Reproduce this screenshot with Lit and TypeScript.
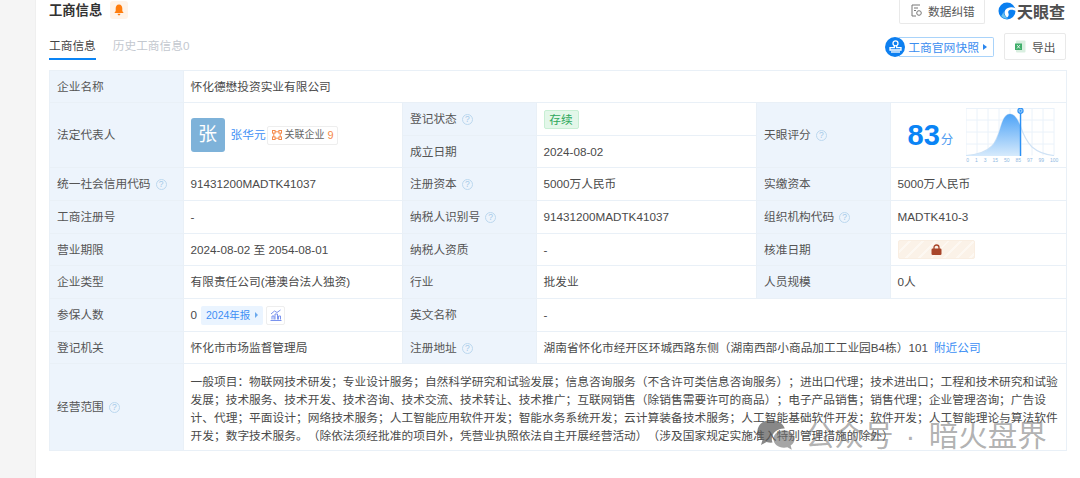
import { LitElement, html, css, svg } from "lit";
import { customElement } from "lit/decorators.js";

const help = html`<span class="help">?</span>`;

const curve = "M0 47.5C12 47 20 44 26 38C31 33 33 24 36 15C38 9 41 6 44 6C48 6 51 10 54 17C57 26 60 33 66 39C72 44 80 47 88 47.5";

const chart = svg`
<defs><linearGradient id="fillg" x1="0" y1="0" x2="0" y2="1"><stop offset="0" stop-color="#4da3f7"/><stop offset="1" stop-color="#d6eafc"/></linearGradient>
<clipPath id="leftc"><rect x="0" y="0" width="54.5" height="48"/></clipPath></defs>
${[0, 11, 22, 33, 44, 55, 66, 77, 88].map((x) => svg`<line x1=${x} y1="0" x2=${x} y2="47.5" stroke="#eaf2fa" stroke-width="1"/>`)}
${[0.5, 12, 24, 36].map((y) => svg`<line x1="0" y1=${y} x2="88" y2=${y} stroke="#eaf2fa" stroke-width="1"/>`)}
<path d=${curve} fill="none" stroke="#cfe2f5" stroke-width="1.2"/>
<path d=${curve + "V48H0Z"} fill="url(#fillg)" clip-path="url(#leftc)"/>
<line x1="54.5" y1="6" x2="54.5" y2="48" stroke="#2b90f5" stroke-width="1.4"/>
<circle cx="54.5" cy="2.8" r="2.6" fill="#9ccdf9" stroke="#2b90f5" stroke-width="1.1"/>
<circle cx="54.5" cy="2.8" r="0.9" fill="#2b90f5"/>
`;

@customElement("app-root")
export class AppRoot extends LitElement {
  static styles = css`
    :host { display: block; position: relative; width: 1080px; height: 478px; overflow: hidden; background: #fff;
      font-family: "Liberation Sans", "Noto Sans CJK SC", sans-serif; font-size: 11.7px; color: #4a4a4a; text-spacing-trim: space-all; }
    .page { display: flex; height: 478px; }
    .rail { width: 36px; flex: none; background: #f5f5f5; border-right: 1px solid #efefef; box-sizing: border-box; }
    .main { flex: 1; padding: 0 14px 0 13px; min-width: 0; }
    .head { display: flex; align-items: center; height: 24px; }
    .title { font-size: 13.3px; font-weight: 700; color: #333; line-height: 20px; margin-top: -3px; }
    .bell { width: 18px; height: 18px; margin: -5px 0 0 7.5px; background: #fff3e8; border-radius: 3px; display: flex; align-items: center; justify-content: center; }
    .spacer { flex: 1; }
    .btn { display: flex; align-items: center; box-sizing: border-box; border: 1px solid #e9e9e9; border-radius: 2px; background: #fff; color: #555; }
    .fix { width: 86px; height: 25px; margin-top: -2px; padding-left: 11px; gap: 6px; border-top: 0; }
    .logo { display: flex; align-items: center; gap: 1px; margin: -3px 0 0 13px; width: 68px; font-size: 16px; font-weight: 700; color: #505050; white-space: nowrap; }
    .bar { display: flex; align-items: stretch; height: 27px; margin-top: 9px; }
    .tab { font-size: 11.7px; line-height: 25px; height: 25px; border-bottom: 2.5px solid transparent; margin-right: 17px; color: #c3c8cf; }
    .tab.on { color: #444; border-bottom-color: #0a84f5; }
    .snap { align-self: center; display: flex; align-items: center; height: 20px; position: relative; margin-right: 10px; }
    .snap-ic { width: 20px; height: 20px; border-radius: 50%; background: #0d7ff0; display: flex; align-items: center; justify-content: center; position: relative; z-index: 1; }
    .snap-txt { display: flex; align-items: center; height: 20px; box-sizing: border-box; margin-left: -6px; padding: 0 6px 0 9px; border: 1px solid #a9d3fa; border-left: 0; border-radius: 0 2px 2px 0; color: #3b8df0; font-size: 11.8px; gap: 4px; }
    .tri { width: 0; height: 0; border-left: 4px solid #2a86ee; border-top: 3.5px solid transparent; border-bottom: 3.5px solid transparent; }
    .export { width: 62px; height: 27px; padding-left: 10px; gap: 6px; }
    table { margin-top: 10px; border-collapse: collapse; table-layout: fixed; width: 1017px; }
    th, td { border: 1px solid #e9f0f7; padding: 0 6.5px; font-weight: 400; text-align: left; white-space: nowrap; line-height: 18px; }
    th { background: #edf4fc; padding-left: 7px; color: #555; }
    td.wrap { white-space: normal; padding-top: 3px; font-size: 11.73px; }
    .help { display: inline-flex; width: 9px; height: 9px; margin: 0 0 0 5px; border: 1px solid #bcd8ef; border-radius: 50%; align-items: center; justify-content: center; font-size: 8.5px; line-height: 9px; color: #a4c9e8; vertical-align: 1px; }
    .link { color: #3d8ff5; }
    .rep { display: flex; align-items: center; }
    .avatar { width: 34px; height: 34px; background: #7eb2d9; border-radius: 3px; color: #fff; font-size: 19px; display: flex; align-items: center; justify-content: center; margin-right: 6px; }
    .assoc { display: inline-flex; align-items: center; width: 71px; height: 19px; box-sizing: border-box; margin-left: 1px; padding: 0 0 0 4px; border: 1px solid #eeeeee; border-radius: 2px; font-size: 10px; color: #666; gap: 3px; }
    .assoc b { font-weight: 400; color: #f58a4b; font-size: 11px; margin-left: 0; }
    .status { display: inline-block; width: 35px; box-sizing: border-box; height: 19px; line-height: 17px; text-align: center; background: #e3f7e9; border: 1px solid #c8efd4; border-radius: 2px; color: #2fa85c; }
    .score { display: flex; align-items: center; }
    .num { font-size: 29px; font-weight: 700; color: #0a84f5; line-height: 32px; margin-left: 10px; }
    .fen { font-size: 12.5px; color: #4f9cf0; margin: 10px 0 0 1px; }
    .chartbox { margin-left: 13px; width: 92px; position: relative; }
    .chartbox svg { display: block; }
    .ticks { display: flex; justify-content: space-between; width: 92px; font-size: 5px; line-height: 6px; color: #8fb9e2; margin-top: 1px; }
    .lock { width: 77px; height: 19px; border-radius: 2px; display: flex; align-items: center; justify-content: center; border: 1px solid #f9eee2; box-sizing: border-box;
      background: repeating-linear-gradient(135deg, #fbf2e8 0 7px, #fdf8f2 7px 9px); }
    .ins { display: flex; align-items: center; }
    .rpt { display: inline-flex; align-items: center; gap: 5px; width: 62px; height: 19px; box-sizing: border-box; margin-left: 4px; padding-left: 5px; background: #eaf4ff; border-radius: 2px; color: #3d8ff5; font-size: 10.5px; }
    .rpt .tri { border-left-color: #6aa9ee; border-left-width: 3px; border-top-width: 3px; border-bottom-width: 3px; }
    .trend { width: 19px; height: 19px; box-sizing: border-box; margin-left: 3px; border: 1px solid #eeeeee; border-radius: 2px; display: flex; align-items: center; justify-content: center; }
    .near { margin-left: 6px; }
    .wm { position: absolute; left: 757px; top: 419px; display: flex; align-items: center; color: rgba(120,120,120,.58); font-size: 29.5px; line-height: 34px; white-space: nowrap; }
    .wm svg { margin-right: 10px; }
    .wm .dot { margin: 0 13.5px 0 12px; }
  `;

  render() {
    return html`
      <div class="page">
        <div class="rail"></div>
        <div class="main">
          <div class="head">
            <span class="title">工商信息</span>
            <span class="bell"><svg width="10" height="12" viewBox="0 0 10 12"><path d="M5 0.5C7.3 0.5 8.3 2.3 8.3 4.4V7L9.6 9H0.4L1.7 7V4.4C1.7 2.3 2.7 0.5 5 0.5ZM3.6 9.8H6.4C6.3 11 5.7 11.5 5 11.5S3.7 11 3.6 9.8Z" fill="#ff7d0d"/></svg></span>
            <span class="spacer"></span>
            <span class="btn fix">
              <svg width="11" height="13" viewBox="0 0 11 13" fill="none" stroke="#777" stroke-width="1"><path d="M9 1H1V12H5"/><path d="M3 4H7M3 6.5H5"/><circle cx="8" cy="9" r="2.3"/></svg>
              数据纠错
            </span>
            <span class="logo">
              <svg width="18" height="18" viewBox="0 0 18 18"><circle cx="9" cy="9" r="8.5" fill="#0a7ff0"/><path d="M17.8 6.5C14 4.3 9.5 5.2 7.3 8C5.8 10.2 6.5 13.5 9 15.5C10.5 14.5 11 13 10.5 11.5C9.7 9.8 10.5 8 12.5 7.8C14.5 7.5 16.5 8.2 18 9Z" fill="#fff"/><path d="M3 14C4.5 12.5 5 11 5.2 9.5C5.8 12.5 7.5 15 10 16.5C7.5 17 5 16 3 14Z" fill="#6cc3ee"/></svg>
              <span>天眼查</span>
            </span>
          </div>
          <div class="bar">
            <span class="tab on">工商信息</span>
            <span class="tab">历史工商信息0</span>
            <span class="spacer"></span>
            <span class="snap">
              <span class="snap-ic"><svg width="13" height="13" viewBox="0 0 13 13" fill="none" stroke="#fff" stroke-width="1.3"><circle cx="6.5" cy="3.3" r="2.5"/><path d="M5.3 5.5V7.7H1V10H12V7.7H7.7V5.5"/><path d="M2 12H11"/></svg></span>
              <span class="snap-txt">工商官网快照<i class="tri"></i></span>
            </span>
            <span class="btn export">
              <svg width="11" height="13" viewBox="0 0 11 13"><rect x="1" y="0.5" width="9.5" height="12" rx="1" fill="#d9efe0"/><rect x="0" y="3.5" width="7" height="6.5" fill="#3fae6a"/><path d="M2 5L5 8.5M5 5L2 8.5" stroke="#fff" stroke-width="0.8"/></svg>
              导出
            </span>
          </div>
          <table>
            <colgroup><col style="width:134px"/><col style="width:219px"/><col style="width:134px"/><col style="width:220px"/><col style="width:134px"/><col style="width:176px"/></colgroup>
            <tr style="height:32px"><th>企业名称</th><td colspan="5">怀化德懋投资实业有限公司</td></tr>
            <tr style="height:33px">
              <th rowspan="2">法定代表人</th>
              <td rowspan="2"><div class="rep"><span class="avatar">张</span><span class="link">张华元</span>
                <span class="assoc"><svg width="10" height="10" viewBox="0 0 10 10" fill="none" stroke="#f58a4b" stroke-width="1"><rect x="0.5" y="0.5" width="2.6" height="2.6"/><rect x="6.9" y="0.5" width="2.6" height="2.6"/><rect x="0.5" y="6.9" width="2.6" height="2.6"/><rect x="6.9" y="6.9" width="2.6" height="2.6"/><path d="M3 1.8H7M1.8 3V7M8.2 3V7M3 8.2H7"/></svg>关联企业<b>9</b></span></div></td>
              <th>登记状态${help}</th><td><span class="status">存续</span></td>
              <th rowspan="2">天眼评分${help}</th>
              <td rowspan="2"><div class="score"><span class="num">83</span><span class="fen">分</span>
                <div class="chartbox"><svg width="90" height="48" viewBox="0 0 90 48">${chart}</svg>
                <div class="ticks"><span>0</span><span>1</span><span>3</span><span>15</span><span>50</span><span>85</span><span>97</span><span>99</span><span>100</span></div></div></div></td>
            </tr>
            <tr style="height:32px"><th>成立日期</th><td>2024-08-02</td></tr>
            <tr style="height:33px"><th>统一社会信用代码${help}</th><td>91431200MADTK41037</td><th>注册资本${help}</th><td>5000万人民币</td><th>实缴资本</th><td>5000万人民币</td></tr>
            <tr style="height:33px"><th>工商注册号</th><td>-</td><th>纳税人识别号${help}</th><td>91431200MADTK41037</td><th>组织机构代码${help}</th><td>MADTK410-3</td></tr>
            <tr style="height:32px"><th>营业期限</th><td>2024-08-02 至 2054-08-01</td><th>纳税人资质</th><td>-</td><th>核准日期</th>
              <td><div class="lock"><svg width="11" height="11" viewBox="0 0 11 11"><path d="M3 5V3.4C3 2 4 1 5.5 1S8 2 8 3.4V5" fill="none" stroke="#a8452a" stroke-width="1.3"/><rect x="0.5" y="4.5" width="10" height="6.5" rx="1.2" fill="#a8452a"/></svg></div></td></tr>
            <tr style="height:33px"><th>企业类型</th><td>有限责任公司(港澳台法人独资)</td><th>行业</th><td>批发业</td><th>人员规模</th><td>0人</td></tr>
            <tr style="height:33px"><th>参保人数</th><td><div class="ins">0<span class="rpt">2024年报<i class="tri"></i></span>
              <span class="trend"><svg width="12" height="12" viewBox="0 0 12 12" fill="none" stroke="#7a93ee" stroke-width="1"><path d="M0.5 11.5H11.5M2 10.5V7H4V10.5M5 10.5V5H7.5V10.5M8.5 10.5V7H10.5V10.5M1 5L4.5 2L7 3.5L10.5 1"/></svg></span></div></td>
              <th>英文名称</th><td colspan="3">-</td></tr>
            <tr style="height:32px"><th>登记机关</th><td>怀化市市场监督管理局</td><th>注册地址${help}</th><td colspan="3">湖南省怀化市经开区环城西路东侧（湖南西部小商品加工工业园B4栋）101<span class="link near">附近公司</span></td></tr>
            <tr style="height:87px"><th>经营范围${help}</th><td colspan="5" class="wrap">一般项目：物联网技术研发；专业设计服务；自然科学研究和试验发展；信息咨询服务（不含许可类信息咨询服务）；进出口代理；技术进出口；工程和技术研究和试验发展；技术服务、技术开发、技术咨询、技术交流、技术转让、技术推广；互联网销售（除销售需要许可的商品）；电子产品销售；销售代理；企业管理咨询；广告设计、代理；平面设计；网络技术服务；人工智能应用软件开发；智能水务系统开发；云计算装备技术服务；人工智能基础软件开发；软件开发；人工智能理论与算法软件开发；数字技术服务。（除依法须经批准的项目外，凭营业执照依法自主开展经营活动）（涉及国家规定实施准入特别管理措施的除外）</td></tr>
          </table>
        </div>
      </div>
      <div class="wm">
        <svg width="38" height="34" viewBox="0 0 38 34"><path d="M14 1C6.5 1 0.5 6 0.5 12.5C0.5 16 2.5 19 5.5 21L4 26L9.5 23C11 23.5 12.5 23.7 14 23.7C14.5 23.7 15 23.7 15.5 23.6C15 22.4 14.8 21.2 14.8 20C14.8 14 20.3 9.5 27 9.5H27.8C26.2 4.5 20.6 1 14 1Z" fill="rgba(90,90,90,.72)"/><path d="M37.5 20C37.5 15 32.7 11.3 27 11.3S16.5 15 16.5 20S21.3 28.7 27 28.7C28.2 28.7 29.3 28.5 30.4 28.2L34.8 30.8L33.6 26.6C36 25 37.5 22.7 37.5 20Z" fill="rgba(110,110,110,.62)"/></svg>
        <span>公众号</span><span class="dot">·</span><span>暗火盘界</span>
      </div>
    `;
  }
}
